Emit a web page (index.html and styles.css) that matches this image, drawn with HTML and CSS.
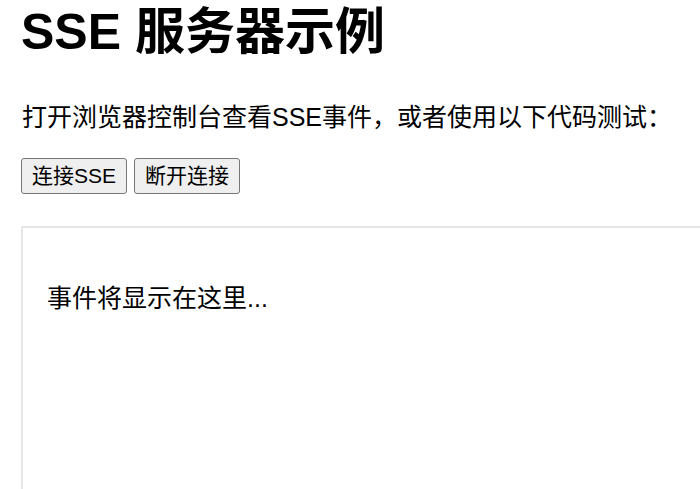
FILE: index.html
```html
<!DOCTYPE html>
<html>
<head>
	<meta charset="utf-8">
	<meta name="viewport" content="width=device-width, initial-scale=1">
	<link rel="stylesheet" href="styles.css">
</head>
<body>
	<h1>SSE 服务器示例</h1>
	<p>打开浏览器控制台查看SSE事件，或者使用以下代码测试：</p>
	<div class="actions">
		<button id="connect">连接SSE</button>
		<button id="disconnect">断开连接</button>
	</div>
	<div id="events">
		<div class="placeholder">事件将显示在这里...</div>
	</div>
</body>
</html>
```

FILE: styles.css
```css
html {
	overflow: hidden;
}

body {
	margin: 0;
	padding: 4px 21px 0;
	font-family: "Liberation Sans", "Noto Sans CJK SC", sans-serif;
	font-size: 25px;
	color: #000;
	background: #fff;
}

h1 {
	margin: 0;
	font-size: 50px;
	line-height: 56px;
	font-weight: bold;
}

p {
	margin: 41px 0 0;
	padding-left: 1px;
	line-height: 32px;
}

.actions {
	display: flex;
	gap: 7px;
	margin-top: 25px;
}

button {
	font-family: "Liberation Sans", "Noto Sans CJK SC", sans-serif;
	font-size: 21px;
	line-height: 30px;
	height: 36px;
	padding: 0 10px;
	border: 1px solid #767676;
	border-radius: 3px;
	background: #efefef;
	color: #000;
}

#events {
	margin-top: 32px;
	width: 760px;
	height: 400px;
	border: 2px solid #e6e6e6;
	padding: 0 24px;
}

.placeholder {
	margin-top: 54px;
	line-height: 32px;
}
```
